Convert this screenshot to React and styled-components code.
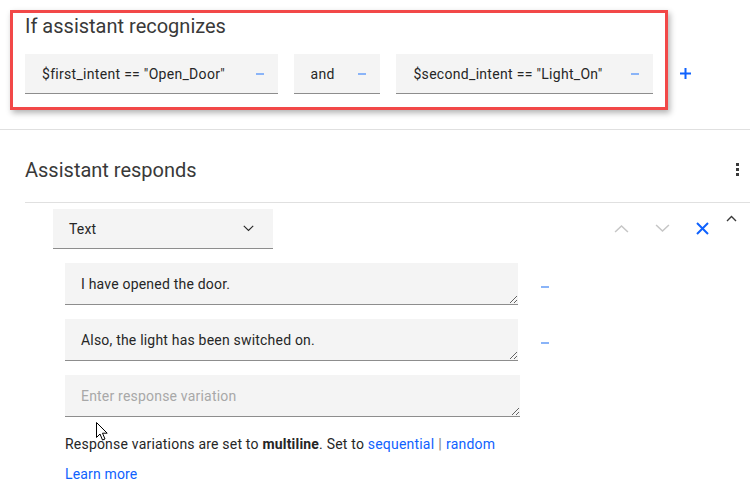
import React from 'react';
import styled, { createGlobalStyle } from 'styled-components';

const GlobalStyle = createGlobalStyle`
  body {
    margin: 0;
    background: #ffffff;
    font-family: Roboto, "Noto Sans", sans-serif;
    color: #161616;
  }
`;

const Page = styled.div`
  position: relative;
  width: 750px;
  height: 498px;
  overflow: hidden;
  background: #ffffff;
`;

const TopRow = styled.div`
  display: flex;
  align-items: flex-start;
  padding: 10px 0 0 10px;
`;

const HighlightBox = styled.section`
  box-sizing: border-box;
  width: 658px;
  border: 3px solid #f24848;
  box-shadow: 2px 3px 6px rgba(0, 0, 0, 0.3);
  padding: 0 12px 13px;
`;

const Heading = styled.h2`
  margin: 0;
  font-size: 20px;
  line-height: 26px;
  font-weight: 400;
  color: #393939;
`;

const ConditionList = styled.div`
  display: flex;
  gap: 16px;
  margin-top: 15px;
`;

const Field = styled.div`
  box-sizing: border-box;
  width: ${(p) => p.$width}px;
  height: 40px;
  display: flex;
  align-items: center;
  justify-content: space-between;
  padding: 0 14px 0 17px;
  background: #f4f4f4;
  border-bottom: 1px solid #8d8d8d;
  font-size: 14px;
  letter-spacing: 0.3px;
  color: #262626;
`;

const Minus = styled.span`
  display: inline-block;
  width: 8px;
  height: 2px;
  background: #8ab4f8;
  flex-shrink: 0;
  margin-top: ${(p) => p.$offset || 0}px;
`;

const PlusButton = styled.span`
  margin: 58px 0 0 12px;
  color: #0f62fe;
  display: flex;
`;

const Divider = styled.hr`
  margin: ${(p) => p.$top || 0}px 0 0 ${(p) => p.$indent || 0}px;
  border: none;
  border-top: 1px solid #e0e0e0;
  height: 0;
`;

const SectionHeader = styled.div`
  height: 72px;
  box-sizing: border-box;
  padding: 8px 11px 0 25px;
  display: flex;
  align-items: center;
  justify-content: space-between;
`;

const Kebab = styled.span`
  display: flex;
  flex-direction: column;
  gap: 2px;
  margin-top: -2px;
  span {
    width: 3px;
    height: 3px;
    background: #393939;
  }
`;

const ResponseBlock = styled.div`
  padding: 6px 0 0 53px;
`;

const ResponseTop = styled.div`
  display: flex;
  align-items: flex-start;
`;

const Dropdown = styled.div`
  box-sizing: border-box;
  width: 220px;
  height: 40px;
  padding: 0 19px 0 16px;
  display: flex;
  align-items: center;
  justify-content: space-between;
  background: #f4f4f4;
  border-bottom: 1px solid #8d8d8d;
  font-size: 14px;
  letter-spacing: 0.16px;
  color: #262626;
`;

const Controls = styled.div`
  display: flex;
  align-items: flex-start;
  margin-left: 341px;
`;

const IconSlot = styled.span`
  display: flex;
  margin: ${(p) => p.$top || 0}px ${(p) => p.$gap || 0}px 0 0;
`;

const Variations = styled.div`
  margin: 14px 0 0 12px;
  display: flex;
  flex-direction: column;
  gap: 14px;
`;

const VariationRow = styled.div`
  display: flex;
  align-items: center;
  gap: 23px;
`;

const Variation = styled.textarea`
  box-sizing: border-box;
  width: ${(p) => p.$width || 453}px;
  height: 42px;
  margin: 0;
  padding: 11px 16px;
  border: none;
  border-bottom: 1px solid #8d8d8d;
  background: #f4f4f4;
  font-family: Roboto, "Noto Sans", sans-serif;
  font-size: 14px;
  letter-spacing: 0.2px;
  line-height: 20px;
  color: #262626;
  resize: both;
  outline: none;
  &::placeholder {
    color: #a8a8a8;
  }
`;

const Helper = styled.p`
  margin: 17px 0 0 12px;
  font-size: 14px;
  letter-spacing: 0.2px;
  line-height: 20px;
  color: #262626;
  b {
    font-weight: 700;
  }
`;

const Link = styled.a`
  color: #0f62fe;
  text-decoration: none;
`;

const Separator = styled.span`
  color: #8d8d8d;
  font-weight: 700;
  margin: 0 4px;
`;

const LearnMore = styled(Link)`
  display: block;
  margin: 10px 0 0 12px;
  font-size: 14px;
  letter-spacing: 0.16px;
  line-height: 20px;
`;

const Cursor = styled.svg`
  position: absolute;
  left: 96px;
  top: 422px;
`;

const Chevron = ({ up, color, width = 14, height = 9 }) => (
  <svg width={width} height={height} viewBox="0 0 14 9" fill="none" preserveAspectRatio="none">
    <path
      d={up ? 'M1 8 L7 2 L13 8' : 'M1 1 L7 7 L13 1'}
      stroke={color}
      strokeWidth="1.4"
    />
  </svg>
);

const conditions = [
  { text: '$first_intent == "Open_Door"', width: 253 },
  { text: 'and', width: 87 },
  { text: '$second_intent == "Light_On"', width: 257 },
];

const variations = ['I have opened the door.', 'Also, the light has been switched on.'];

const App = () => (
  <Page>
    <GlobalStyle />
    <TopRow>
      <HighlightBox>
        <Heading>If assistant recognizes</Heading>
        <ConditionList>
          {conditions.map((c) => (
            <Field key={c.text} $width={c.width}>
              <span>{c.text}</span>
              <Minus />
            </Field>
          ))}
        </ConditionList>
      </HighlightBox>
      <PlusButton>
        <svg width="11" height="11" viewBox="0 0 11 11">
          <path d="M5.5 0 V11 M0 5.5 H11" stroke="#0f62fe" strokeWidth="2" />
        </svg>
      </PlusButton>
    </TopRow>

    <Divider $top={19} />

    <SectionHeader>
      <Heading>Assistant responds</Heading>
      <Kebab>
        <span />
        <span />
        <span />
      </Kebab>
    </SectionHeader>

    <Divider $indent={25} />

    <ResponseBlock>
      <ResponseTop>
        <Dropdown>
          <span>Text</span>
          <Chevron color="#262626" width={11} height={7} />
        </Dropdown>
        <Controls>
          <IconSlot $top={15} $gap={26}>
            <Chevron up color="#c6c6c6" width={15} height={9} />
          </IconSlot>
          <IconSlot $top={15} $gap={26}>
            <Chevron color="#c6c6c6" width={15} height={9} />
          </IconSlot>
          <IconSlot $top={13} $gap={17}>
            <svg width="13" height="13" viewBox="0 0 13 13">
              <path d="M1 1 L12 12 M12 1 L1 12" stroke="#0f62fe" strokeWidth="2" />
            </svg>
          </IconSlot>
          <IconSlot $top={6}>
            <svg width="11" height="7" viewBox="0 0 11 7">
              <path d="M1 6 L5.5 1.5 L10 6" stroke="#393939" strokeWidth="1.4" fill="none" />
            </svg>
          </IconSlot>
        </Controls>
      </ResponseTop>

      <Variations>
        {variations.map((v) => (
          <VariationRow key={v}>
            <Variation defaultValue={v} />
            <Minus $offset={6} />
          </VariationRow>
        ))}
        <VariationRow>
          <Variation $width={455} placeholder="Enter response variation" />
        </VariationRow>
      </Variations>

      <Helper>
        Response variations are set to <b>multiline</b>. Set to{' '}
        <Link href="#">sequential</Link>
        <Separator>|</Separator>
        <Link href="#">random</Link>
      </Helper>
      <LearnMore href="#">Learn more</LearnMore>
    </ResponseBlock>

    <Cursor width="12" height="19" viewBox="0 0 12 19">
      <path
        d="M0.5 0.5 L0.5 15.5 L4 12 L6.5 18 L9 17 L6.5 11.2 L11.2 11.2 Z"
        fill="#ffffff"
        stroke="#000000"
        strokeWidth="1"
      />
    </Cursor>
  </Page>
);

export default App;
